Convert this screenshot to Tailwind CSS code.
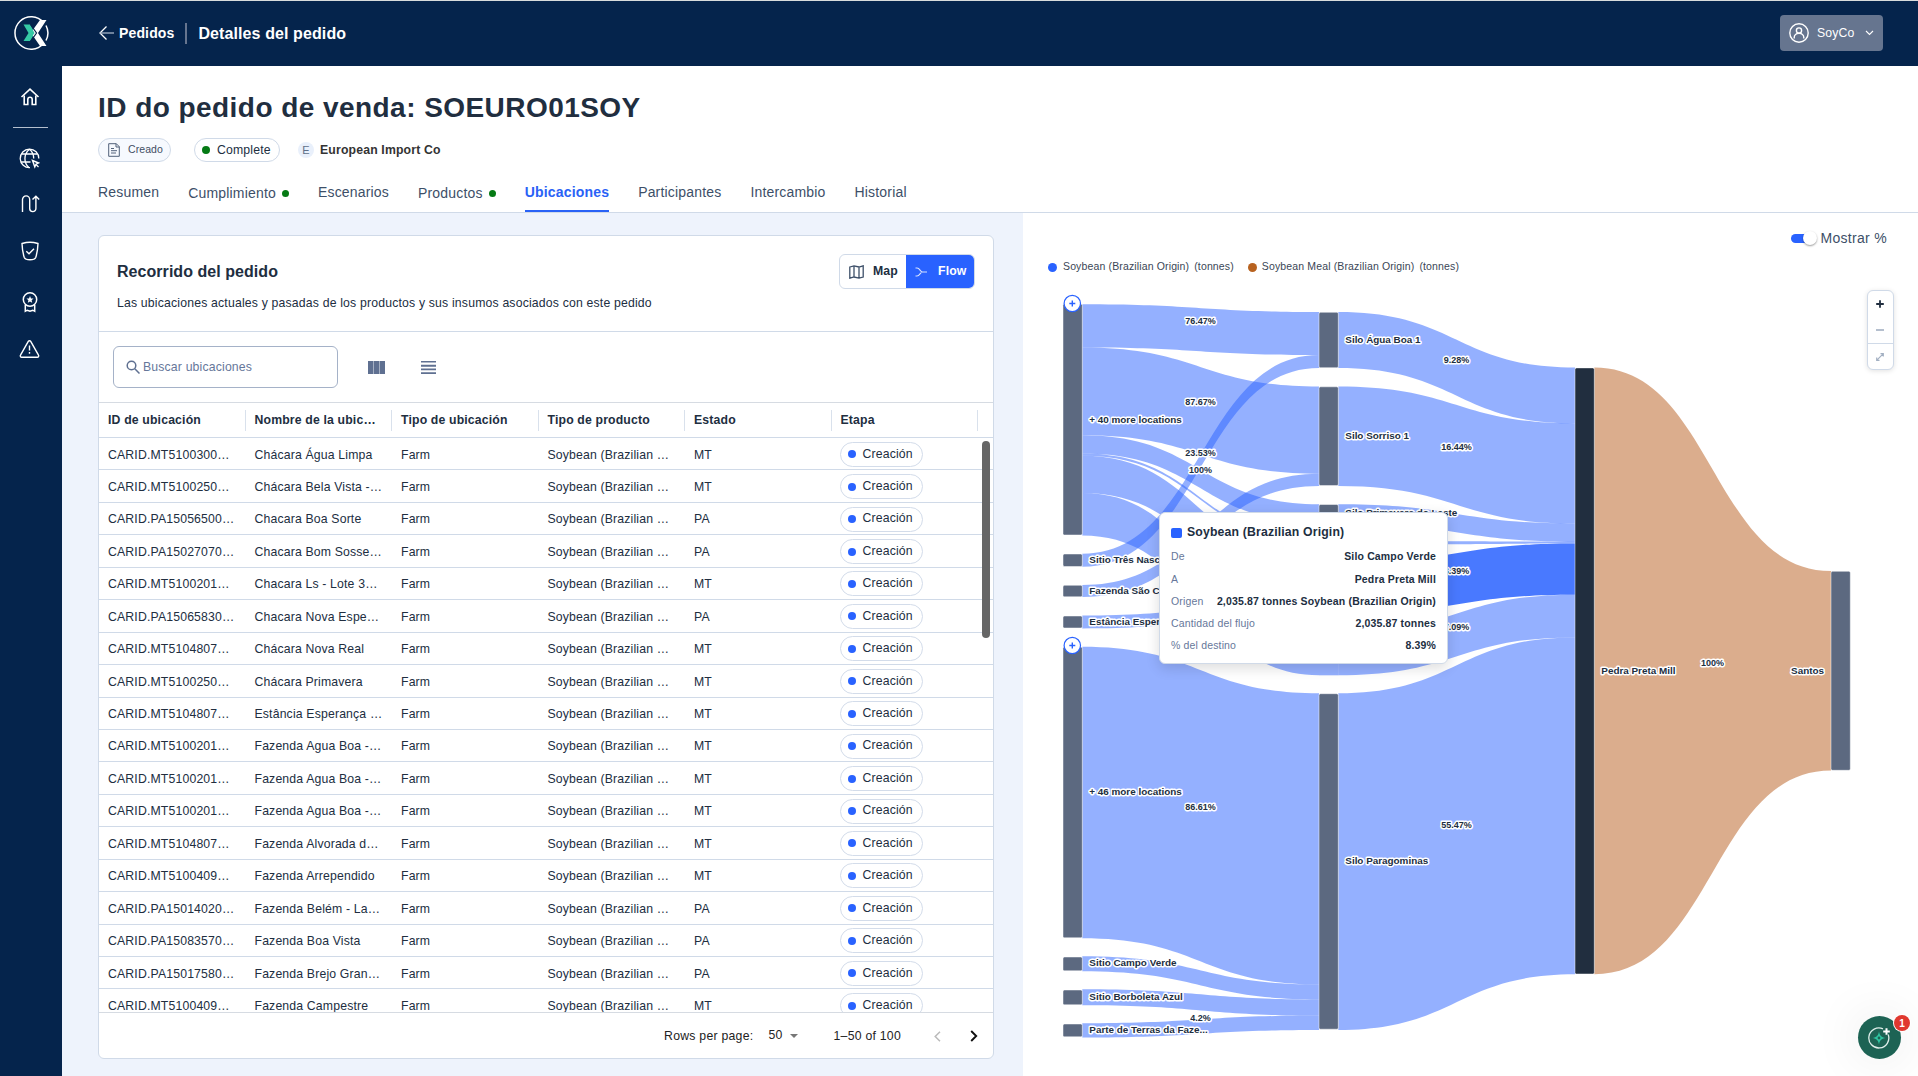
<!DOCTYPE html>
<html lang="es">
<head>
  <meta charset="utf-8">
  <meta name="viewport" content="width=device-width,initial-scale=1">
  <title>Detalles del pedido</title>
  <script src="https://cdn.jsdelivr.net/npm/@tailwindcss/browser@4"></script>
</head>
<body class="w-[1918px] h-[1076px] overflow-hidden flex flex-col bg-white text-[#212e3f] font-['Liberation_Sans',Arial,sans-serif] text-[12.25px] tracking-[0.16px]">

  <!-- ───────── TOP BAR ───────── -->
  <header class="h-[66px] shrink-0 bg-[#05244c] border-t border-[#d9dcdc] text-white flex items-center pr-[35px] pb-px">
    <div class="w-[62px] flex justify-center">
      <svg width="36" height="36" viewBox="0 0 36 36" fill="none">
        <path d="M30.5 7.500A16.200 16.200 0 1 0 30.500 28.500" stroke="#fff" stroke-width="1.500"/>
        <path d="M33 10.500A16.200 16.200 0 0 1 33 25.500" stroke="#fff" stroke-width="1.500"/>
        <path d="M10.500 9.500H17L22 18L17 26H10.500L15.500 18Z" fill="#35c9a5"/>
        <path d="M27 5H33.500L25 18L33.500 31H27L19.800 20.500L21.500 18L19.800 15Z" fill="#fff"/>
        <path d="M17.500 9.500L23.500 18L17.500 26.500" stroke="#05244c" stroke-width="1.200"/>
      </svg>
    </div>
    <a class="ml-9 flex items-center text-sm font-bold tracking-[0.14px]">
      <svg class="mr-[5px]" width="16" height="16" viewBox="0 0 16 16" fill="none" stroke="#fff" stroke-width="1.300"><path d="M8.500 1.500L2 8l6.500 6.500"/><path d="M2 8h14" stroke="#a9b6c8"/></svg>
      Pedidos
    </a>
    <span class="w-[2px] h-[21px] bg-[#66758f] mx-[11px]"></span>
    <h2 class="text-base font-bold tracking-[0.1px] pt-px">Detalles del pedido</h2>
    <button class="ml-auto w-[103px] h-9 rounded bg-[#66758f] flex items-center pl-[9px]">
      <svg width="20" height="20" viewBox="0 0 20 20" fill="none" stroke="#fff" stroke-width="1.400"><circle cx="10" cy="10" r="9.200"/><circle cx="10" cy="7.500" r="2.600"/><path d="M5.200 15.500v-1a4.800 4.300 0 0 1 9.600 0v1"/></svg>
      <span class="ml-2">SoyCo</span>
      <svg class="ml-[10px]" width="9" height="6" viewBox="0 0 9 6" fill="none" stroke="#fff" stroke-width="1.100"><path d="M1 1l3.500 3.500L8 1"/></svg>
    </button>
  </header>

  <div class="flex flex-1 min-h-0">
    <!-- ───────── SIDEBAR ───────── -->
    <nav class="w-[62px] shrink-0 bg-[#05244c] flex flex-col items-center pr-[3px] pt-[21px]">
      <svg width="20" height="20" viewBox="0 0 20 20" fill="none" stroke="#fff" stroke-width="1.600"><path d="M1.500 10L10 2.200L18.500 10"/><path d="M4.200 8.500v9h3.600v-5a2.200 2.200 0 0 1 4.400 0v5h3.600v-9"/></svg>
      <span class="mt-5 ml-[2px] w-[35px] h-px bg-[#b4bfce]"></span>
      <svg class="mt-5" width="21" height="21" viewBox="0 0 21 21" fill="none" stroke="#fff" stroke-width="1.300"><path d="M11 19.700A9.300 9.300 0 1 1 19.800 10.500"/><path d="M10.500 1.200C4.500 6 4.500 15 10 19.700M10.500 1.200c3 2.500 4.200 5.800 4.200 9.300M2.500 6h16M2 14h9.500"/><path d="M13.500 12.500l6 2.500-2.500 1.200-1.200 2.600z" stroke-width="1.400"/><path d="M17 16.500l2.500 2.500"/></svg>
      <svg class="mt-[25px]" width="20" height="20" viewBox="0 0 20 20" fill="none" stroke="#fff" stroke-width="1.400"><path d="M2.500 18V5.500a3.600 3.600 0 0 1 7.200 0v9a3 3 0 0 0 6.200 0V3M12.500 5.500L15.900 2.200l3.300 3.300"/></svg>
      <svg class="mt-[27px]" width="20" height="20" viewBox="0 0 20 20" fill="none" stroke="#fff" stroke-width="1.400"><path d="M10 1.300c-2.500 0-5.500.5-8 1.200.2 5 .9 10 2.300 14 .6 1.400 3 2.300 5.700 2.300s5.100-.9 5.700-2.300c1.400-4 2.100-9 2.300-14-2.500-.7-5.500-1.200-8-1.200z"/><path d="M6.300 10.200l2.700 2.500 5-5"/></svg>
      <svg class="mt-[30px]" width="20" height="22" viewBox="0 0 20 22" fill="none" stroke="#fff" stroke-width="1.500"><circle cx="10" cy="8.500" r="6.700"/><path d="M5.300 14v6.200l2-1 2.700 1 2.700-1 2 1V14"/><path d="M10 5l1 2.400 2.500.2-1.900 1.600.6 2.500L10 10.400l-2.200 1.300.6-2.500-1.900-1.600 2.500-.2z" fill="#fff" stroke="none"/></svg>
      <svg class="mt-[26px]" width="21" height="20" viewBox="0 0 21 20" fill="none" stroke="#fff" stroke-width="1.400"><path d="M9.300 2.400a1.400 1.400 0 0 1 2.400 0l7.800 13.800a1.300 1.300 0 0 1-1.200 2H2.700a1.300 1.300 0 0 1-1.200-2z"/><path d="M10.500 6.500v5M10.500 13v1.800"/></svg>
    </nav>

    <main class="flex-1 min-w-0 flex flex-col">
      <!-- ───────── ORDER TITLE + TABS ───────── -->
      <section class="h-[147px] shrink-0 pl-9 border-b border-[#d0dae8] flex flex-col">
        <h1 class="mt-6 h-9 leading-9 text-[28px] font-bold tracking-[0.45px]">ID do pedido de venda: SOEURO01SOY</h1>
        <div class="mt-3 h-6 flex items-center">
          <span class="w-[73px] h-6 rounded-full border border-[#d0dae8] bg-[#f6f9fe] flex items-center pl-[9px] text-[10.500px] tracking-[0.08px] text-[#3f4e63]">
            <svg class="mr-2" width="12" height="14" viewBox="0 0 12 14" fill="none" stroke="#52627a"><path d="M.7.700h7.600l3 3v9.600H.700zM8 .700v3.300h3.300M3 5.500h3M3 7.700h6M3 10h5"/></svg>
            Creado
          </span>
          <span class="ml-[23px] w-[86px] h-6 rounded-full border border-[#d0dae8] flex items-center pl-[7px]">
            <span class="w-2 h-2 rounded-full bg-[#057a14] mr-[7px]"></span>Complete
          </span>
          <span class="ml-[18px] w-4 h-4 rounded-full bg-[#e9f0fb] text-[11px] text-[#5f6f88] flex items-center justify-center">E</span>
          <span class="ml-[6px] font-bold text-[#333]">European Import Co</span>
        </div>
        <div class="mt-[15px] h-[35px] flex gap-[29px] text-sm leading-[31px] tracking-[0.18px] text-[#3d4f68]">
          <span>Resumen</span>
          <span class="flex items-center -mt-[2px]">Cumplimiento<i class="w-[7px] h-[7px] rounded-full bg-[#057a14] ml-[6px]"></i></span>
          <span>Escenarios</span>
          <span class="flex items-center -mt-[2px]">Productos<i class="w-[7px] h-[7px] rounded-full bg-[#057a14] ml-[6px]"></i></span>
          <span class="font-bold text-[#2962f6] border-b-2 border-[#2962f6]">Ubicaciones</span>
          <span>Participantes</span>
          <span>Intercambio</span>
          <span>Historial</span>
        </div>
      </section>

      <div class="flex flex-1 min-h-0">
        <!-- ───────── LOCATIONS TABLE ───────── -->
        <section class="w-[961px] shrink-0 bg-[#eef3fc] pl-9 pr-[29px] pt-[22px] pb-[17px] flex">
          <div class="flex-1 min-w-0 bg-white border border-[#d0dae8] rounded-md flex flex-col overflow-hidden">
            <div class="h-[96px] shrink-0 border-b border-[#d0dae8] pl-[18px] pr-[18px] flex justify-between">
              <div class="pt-6">
                <h3 class="text-base leading-6 font-bold tracking-[0.05px]">Recorrido del pedido</h3>
                <p class="mt-[11px] leading-4 tracking-[0.175px]">Las ubicaciones actuales y pasadas de los productos y sus insumos asociados con este pedido</p>
              </div>
              <div class="mt-[18px] w-[136px] h-[35px] rounded-md border border-[#d0dae8] flex overflow-hidden font-bold">
                <span class="w-[66px] flex items-center pl-[9px]">
                  <svg class="mr-[9px]" width="15" height="14" viewBox="0 0 15 14" fill="none" stroke="#3d4f68" stroke-width="1.300"><path d="M.8 2L5 .800 10 2l4.200-1.200V12L10 13.200 5 12 .800 13.200zM5 .800V12M10 2v11.200"/></svg>
                  Map
                </span>
                <span class="flex-1 bg-[#2962ff] text-white flex items-center pl-[9px]">
                  <svg class="mr-[11px]" width="12" height="10" viewBox="0 0 12 10" fill="none" stroke="#d5e1ff" stroke-width="1.100"><path d="M.5 1h1.500C5 1 5 5 7.500 5H12M.500 9h1.500C5 9 5 5 7.500 5"/></svg>
                  Flow
                </span>
              </div>
            </div>

            <div class="h-[71px] shrink-0 border-b border-[#d6dbe2] flex items-center pl-[14px]">
              <div class="w-[225px] h-[42px] rounded-md border border-[#a5b2c8] flex items-center pl-3 text-[#66779a]">
                <svg class="mr-[3px]" width="14" height="14" viewBox="0 0 14 14" fill="none" stroke="#5f7091" stroke-width="1.500"><circle cx="5.500" cy="5.500" r="4.300"/><path d="M8.800 8.800L13.500 13.500"/></svg>
                Buscar ubicaciones
              </div>
              <svg class="ml-[30px]" width="17" height="13" viewBox="0 0 17 13"><path d="M0 0h5v13H0zM6 0h5v13H6zM12 0h5v13h-5z" fill="#5f7091"/><path d="M5 0h1v13H5zM11 0h1v13h-1z" fill="#a5b0c3"/></svg>
              <svg class="ml-9" width="15" height="13" viewBox="0 0 15 13" fill="#5f7091"><path d="M0 0h15v1.500H0zM0 3.800h15v2H0zM0 7.500h15v1.700H0zM0 11.300h15v1.700H0z"/></svg>
            </div>

            <div id="head" class="h-[35px] shrink-0 border-b border-[#d0dae8] flex font-bold"></div>
            <div class="relative h-[575px] overflow-hidden border-b border-[#d6dbe2]">
              <div id="rows"></div>
              <span class="absolute right-[3px] top-[3px] w-2 h-[197px] rounded-full bg-[#666]"></span>
            </div>

            <div class="flex-1 flex items-center justify-end pr-3 pt-px text-[#222] tracking-[0.250px]">
              <span>Rows per page:</span>
              <span class="ml-[15px] pb-px">50</span>
              <svg class="ml-[7px]" width="8" height="4" viewBox="0 0 8 4"><path d="M0 0h8L4 4z" fill="#777"/></svg>
              <span class="ml-9">1–50 of 100</span>
              <svg class="ml-[33px]" width="7" height="11" viewBox="0 0 7 11" fill="none" stroke="#bbb" stroke-width="1.500"><path d="M6 .700L1.200 5.500 6 10.300"/></svg>
              <svg class="ml-[29px] mr-[3px]" width="8" height="12" viewBox="0 0 8 12" fill="none" stroke="#111" stroke-width="1.900"><path d="M1.200 1L6.200 6l-5 5"/></svg>
            </div>
          </div>
        </section>

        <!-- ───────── FLOW CHART ───────── -->
        <section class="relative flex-1 min-w-0 bg-white flex flex-col">
          <div class="mt-4 h-[18px] pr-[31px] flex items-center justify-end text-sm tracking-[0.3px] text-[#3d4f68]">
            <span class="relative w-[26px] h-[9px] mr-1 flex items-center">
              <i class="w-[22px] h-[9px] rounded-full bg-[#2962ff]"></i>
              <i class="absolute right-0 w-[14px] h-[14px] rounded-full bg-white shadow-[0_1px_2px_rgba(0,0,0,0.400)]"></i>
            </span>
            Mostrar %
          </div>
          <div class="mt-3 h-4 pl-[25px] flex items-center text-[10.500px] tracking-[0.140px] text-[#3a4656]">
            <i class="w-[9px] h-[9px] rounded-full bg-[#2962ff] mr-[6px]"></i>Soybean (Brazilian Origin)<span class="ml-[5px]">(tonnes)</span>
            <i class="w-[9px] h-[9px] rounded-full bg-[#b8621f] ml-[14px] mr-[5px]"></i>Soybean Meal (Brazilian Origin)<span class="ml-[5px]">(tonnes)</span>
          </div>
          <svg id="sankey" class="absolute inset-0" width="895" height="863" viewBox="1023 213 895 863" font-weight="700" fill="#212e3f" letter-spacing="0"></svg>

          <!-- zoom control -->
          <div class="absolute left-[844px] top-[77px] w-[27px] h-[80px] rounded-md border border-[#d0dae8] bg-white shadow-[0_1px_5px_rgba(0,0,0,0.120)] flex flex-col items-center">
            <span class="h-[26px] mr-px flex items-center"><svg width="8" height="8" viewBox="0 0 8 8"><path d="M4 .200v7.600M.200 4h7.600" stroke="#212e3f" stroke-width="1.800"/></svg></span>
            <span class="h-[26px] mr-px flex items-center"><svg width="8" height="2" viewBox="0 0 8 2"><path d="M0 1h8" stroke="#a3b0c2" stroke-width="1.600"/></svg></span>
            <span class="flex-1 w-full pr-px border-t border-[#d0dae8] flex items-center justify-center"><svg width="8" height="8" viewBox="0 0 8 8" fill="none" stroke="#a3b0c2" stroke-width="1.200"><path d="M4.500.700h2.800v2.800M7.300.700L.700 7.300M.700 4.500v2.800h2.800"/></svg></span>
          </div>

          <!-- link tooltip -->
          <div class="absolute left-[136px] top-[299px] w-[289px] h-[152px] rounded-md border border-[#d0dae8] bg-white shadow-[0_4px_14px_rgba(0,0,0,0.140)] px-[11px] pt-[9px] text-[10.500px]">
            <div class="h-5 flex items-center text-[12.250px] font-bold"><i class="w-[11px] h-[10px] rounded-[2px] bg-[#2962ff] mr-[5px] mt-px"></i>Soybean (Brazilian Origin)</div>
            <dl id="tip" class="mt-1"></dl>
          </div>

          <!-- chat bubble -->
          <div class="absolute left-[835px] top-[803px] w-[43px] h-[43px] rounded-full bg-[#1d6354] shadow-[0_0_50px_rgba(0,0,0,0.100)] flex items-center justify-center">
            <svg class="mr-px" width="22" height="22" viewBox="0 0 22 22" fill="none"><path d="M15 1.900A10 10 0 1 0 20.200 7.500" stroke="#dfeeea" stroke-width="1.300"/><path d="M11 4.500c.8 4.200 2.300 5.700 6.500 6.500-4.200.8-5.700 2.300-6.500 6.500-.8-4.200-2.300-5.700-6.500-6.500 4.200-.8 5.700-2.300 6.500-6.500z" fill="#2fc6a2"/><circle cx="11" cy="11" r="1.400" fill="#1d6354"/><path d="M18.500 1.200v6.600M15.200 4.500h6.600" stroke="#fff" stroke-width="2"/></svg>
            <span class="absolute -right-[9px] -top-px w-4 h-4 rounded-full ring-1 ring-white bg-[#e0382f] text-white text-[10px] font-bold flex items-center justify-center tracking-normal">1</span>
          </div>
        </section>
      </div>
    </main>
  </div>

  <script>
/* ===== TABLE ===== */
const COLS = ['ID de ubicación','Nombre de la ubic…','Tipo de ubicación','Tipo de producto','Estado','Etapa'];
const ROWS = [
  ['CARID.MT5100300…','Chácara Água Limpa','MT'],
  ['CARID.MT5100250…','Chácara Bela Vista -…','MT'],
  ['CARID.PA15056500…','Chacara Boa Sorte','PA'],
  ['CARID.PA15027070…','Chacara Bom Sosse…','PA'],
  ['CARID.MT5100201…','Chacara Ls - Lote 3…','MT'],
  ['CARID.PA15065830…','Chacara Nova Espe…','PA'],
  ['CARID.MT5104807…','Chácara Nova Real','MT'],
  ['CARID.MT5100250…','Chácara Primavera','MT'],
  ['CARID.MT5104807…','Estância Esperança …','MT'],
  ['CARID.MT5100201…','Fazenda Agua Boa -…','MT'],
  ['CARID.MT5100201…','Fazenda Agua Boa -…','MT'],
  ['CARID.MT5100201…','Fazenda Agua Boa -…','MT'],
  ['CARID.MT5104807…','Fazenda Alvorada d…','MT'],
  ['CARID.MT5100409…','Fazenda Arrependido','MT'],
  ['CARID.PA15014020…','Fazenda Belém - La…','PA'],
  ['CARID.PA15083570…','Fazenda Boa Vista','PA'],
  ['CARID.PA15017580…','Fazenda Brejo Gran…','PA'],
  ['CARID.MT5100409…','Fazenda Campestre','MT'],
];

document.querySelector('#head').innerHTML = COLS.map(c=>`
  <div class="w-[146.500px] shrink-0 pl-[9px] flex items-center justify-between whitespace-nowrap">${c}<i class="w-px h-[21px] bg-[#d9e1ec]"></i></div>`).join('');

const cell = v => `<span class="w-[146.500px] shrink-0 pl-[9px] pt-px whitespace-nowrap">${v}</span>`;
document.querySelector('#rows').innerHTML = ROWS.map(([id,name,uf])=>`
  <div class="h-[32.450px] pt-px border-b border-[#d0dae8] flex items-center">
    ${cell(id)}${cell(name)}${cell('Farm')}${cell('Soybean (Brazilian …')}${cell(uf)}
    <span class="ml-2 w-[83px] h-[25px] rounded-full border border-[#d3dcea] flex items-center pl-[7px]"><i class="w-2 h-2 rounded-full bg-[#2962ff] mr-[7px]"></i><span class="pb-px">Creación</span></span>
  </div>`).join('');

/* ===== TOOLTIP ===== */
document.querySelector('#tip').innerHTML = [
  ['De','Silo Campo Verde'],
  ['A','Pedra Preta Mill'],
  ['Origen','2,035.87 tonnes Soybean (Brazilian Origin)'],
  ['Cantidad del flujo','2,035.87 tonnes'],
  ['% del destino','8.39%'],
].map(([k,v])=>`<div class="h-[22.300px] flex items-center justify-between"><dt class="text-[#66779a]">${k}</dt><dd class="font-bold">${v}</dd></div>`).join('');

/* ===== SANKEY ===== */
const X = [1063,1319,1575,1831], W = 19.3;
const BLUE = '#2962ff', MEAL = '#b85c1c', SLATE = '#5c6980', DARK = '#212e3f';
// column, top, bottom, label, label y
const NODES = [
  [0,304,535,'+ 40 more locations',419.5],
  [0,554,566.5,'Sitio Três Nasc',559.5],
  [0,585.3,596.8,'Fazenda São C',590.7],
  [0,616,628,'Estância Esper',621.5],
  [0,647,937.8,'+ 46 more locations',791.5],
  [0,957,970.8,'Sitio Campo Verde',962.7],
  [0,990,1004.8,'Sitio Borboleta Azul',996.7],
  [0,1024,1036.8,'Parte de Terras da Faze...',1029.7],
  [1,312.3,367.7,'Silo Água Boa 1',339.5],
  [1,386.8,485.6,'Silo Sorriso 1',435.5],
  [1,504.5,522.6,'Silo Primavera do Leste',512.7],
  [1,541.8,543.8,'',0],
  [1,563,614,'',0],
  [1,693.7,1029.2,'Silo Paragominas',860.5],
  [2,367.9,974,'Pedra Preta Mill',670.7],
  [3,571.3,770.3,'Santos',670.7],
];
// column, source top/bottom, target top/bottom
const LINKS = [
  [0,304.3,347.5,312,355.1],
  [0,347.5,435.3,386.5,473.7],
  [0,435.3,453.4,504.3,522.8],
  [0,453.4,455.8,541.7,543.9],
  [0,455.8,493,562.8,600.5],
  [0,493,535.6,632.7,675.3],
  [0,553.7,566.8,355.1,368],
  [0,585,597,473.7,486],
  [0,615.5,628.5,600.5,614.2],
  [0,646.7,938.2,693.3,984.5],
  [0,956.3,971.3,984.5,999.4],
  [0,989.3,1005.3,999.4,1015.6],
  [0,1023.3,1037.5,1015.6,1030],
  [1,312,368,367.5,423.4],
  [1,386.5,486,423.4,523.5],
  [1,504.2,522.8,523.5,541.8],
  [1,541,544.8,541.5,543.6],
  [1,562.8,614.2,543.4,594.7],
  [1,632.7,675.3,594.7,637.4],
  [1,693.3,1030,637.4,974.3],
  [2,367.5,974.3,571,770.6],
];
const HOT = 17;
const PCTS = [
  [1200.500,321,'76.47%'],[1200.500,402,'87.67%'],[1200.500,453,'23.53%'],[1200.500,470,'100%'],
  [1200.500,807,'86.61%'],[1200.500,1018,'4.2%'],
  [1456.500,360,'9.28%'],[1456.500,447,'16.44%'],[1456.500,571,'8.39%'],[1456.500,627,'7.09%'],[1456.500,825,'55.47%'],
  [1712.500,663,'100%'],
];

let out = LINKS.map(([c,a,b,p,q],i)=>{
  const x0 = X[c]+W, x1 = X[c+1], m = (x0+x1)/2;
  return `<path d="M${x0} ${a}C${m} ${a} ${m} ${p} ${x1} ${p}V${q}C${m} ${q} ${m} ${b} ${x0} ${b}Z" fill="${c===2?MEAL:BLUE}" fill-opacity="${i===HOT?0.85:0.5}"/>`;
}).join('');
// flow that passes the second column without a node
out += `<rect x="${X[1]}" y="632.7" width="${W}" height="42.6" fill="${BLUE}" fill-opacity="0.5"/>`;
out += NODES.map(([c,a,b])=>`<rect x="${X[c]}" y="${a}" width="${W}" height="${b-a}" rx="1.500" fill="${c===2?DARK:SLATE}" stroke="#fff" stroke-opacity=".6" stroke-width=".8"/>`).join('');
const halo = 'stroke="#fff" stroke-width="3" stroke-linejoin="round" paint-order="stroke"';
out += NODES.filter(n=>n[3]).map(([c,,,t,y])=> c===3
  ? `<text x="1824" y="${y+3.5}" text-anchor="end" font-size="9.9" ${halo}>${t}</text>`
  : `<text x="${X[c]+W+7}" y="${y+3.5}" font-size="9.9" ${halo}>${t}</text>`).join('');
out += PCTS.map(([x,y,t])=>`<text x="${x}" y="${y+3.2}" text-anchor="middle" font-size="9" ${halo}>${t}</text>`).join('');
// expand handles on the grouped nodes
out += [303.5,645.5].map(y=>`<circle cx="1072.300" cy="${y}" r="8.200" fill="#fff" stroke="${BLUE}" stroke-width="1.200"/><path d="M1069.300 ${y}h6M1072.300 ${y-3}v6" stroke="${BLUE}" stroke-width="1.400"/>`).join('');
document.querySelector('#sankey').innerHTML = out;
  </script>
</body>
</html>
